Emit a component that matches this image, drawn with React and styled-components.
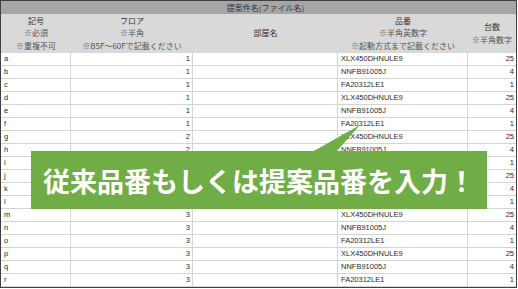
import React from "react";
import styled, { createGlobalStyle } from "styled-components";

const GlobalStyle = createGlobalStyle`
  html, body {
    margin: 0;
    padding: 0;
    background: #fff;
  }
`;

const COLS = "70px 122px 145px 130px 48px";

const parts = [
  { code: "XLX450DHNULE9", qty: 25 },
  { code: "NNFB91005J", qty: 4 },
  { code: "FA20312LE1", qty: 1 },
];

const rows = "abcdefghijklmnopqr".split("").map((mark, i) => ({
  mark,
  floor: i < 6 ? 1 : i < 12 ? 2 : 3,
  ...parts[i % 3],
}));

const App = () => {
  return (
    <>
      <GlobalStyle />
      <Frame>
        <TitleBar>提案件名(ファイル名)</TitleBar>
        <HeaderRow>
          <HeadCell>
            <Label>記号</Label>
            <Note>※必須</Note>
            <Note>※重複不可</Note>
          </HeadCell>
          <HeadCell>
            <Label>フロア</Label>
            <Note>※半角</Note>
            <Note>※B5F〜60Fで記載ください</Note>
          </HeadCell>
          <HeadCell>
            <Label>部屋名</Label>
          </HeadCell>
          <HeadCell>
            <Label>品番</Label>
            <Note>※半角英数字</Note>
            <Note>※起動方式まで記載ください</Note>
          </HeadCell>
          <HeadCell>
            <Label>台数</Label>
            <Note>※半角数字</Note>
          </HeadCell>
        </HeaderRow>
        {rows.map((r) => (
          <DataRow key={r.mark}>
            <Cell>{r.mark}</Cell>
            <Cell $align="right">{r.floor}</Cell>
            <Cell />
            <Cell>{r.code}</Cell>
            <Cell $align="right" $last>
              {r.qty}
            </Cell>
          </DataRow>
        ))}
        <Callout>
          <Tail />
          従来品番もしくは提案品番を入力！
        </Callout>
      </Frame>
    </>
  );
};

const Frame = styled.div`
  position: relative;
  width: 517px;
  box-sizing: border-box;
  border: 1px solid #404040;
  font-family: "Noto Sans CJK JP", "Liberation Sans", sans-serif;
  color: #333;
`;

const TitleBar = styled.div`
  height: 13px;
  background: #a6a6a6;
  padding-left: 14px;
  font-size: 8px;
  line-height: 13px;
  text-align: center;
  color: #333;
`;

const HeaderRow = styled.div`
  display: grid;
  grid-template-columns: ${COLS};
  height: 39px;
  background: #d9d9d9;
`;

const HeadCell = styled.div`
  display: flex;
  flex-direction: column;
  align-items: center;
  justify-content: center;
  font-size: 8px;
  line-height: 12.5px;
  white-space: nowrap;
`;

const Label = styled.span`
  color: #333;
`;

const Note = styled.span`
  color: #555;
`;

const DataRow = styled.div`
  display: grid;
  grid-template-columns: ${COLS};
  height: 13px;
`;

const Cell = styled.div`
  box-sizing: border-box;
  border-bottom: 1px solid #d4d4d4;
  border-right: ${(p) => (p.$last ? "none" : "1px solid #d4d4d4")};
  padding: 0 ${(p) => (p.$align === "right" ? "2px" : "3px")};
  font-family: "Liberation Sans", sans-serif;
  font-size: 7.5px;
  line-height: 12px;
  text-align: ${(p) => p.$align || "left"};
  color: #2a2a2a;
  white-space: nowrap;
`;

const Callout = styled.div`
  position: absolute;
  left: 30px;
  top: 150px;
  width: 456px;
  height: 58px;
  background: #70ad47;
  color: #fff;
  font-family: "Noto Sans CJK JP", sans-serif;
  font-weight: 700;
  font-size: 27px;
  display: flex;
  align-items: center;
  justify-content: center;
  white-space: nowrap;
`;

const Tail = styled.div`
  position: absolute;
  left: 281px;
  top: -26px;
  width: 48px;
  height: 27px;
  background: #70ad47;
  clip-path: polygon(0 100%, 24px 100%, 48px 0);
`;

export default App;
